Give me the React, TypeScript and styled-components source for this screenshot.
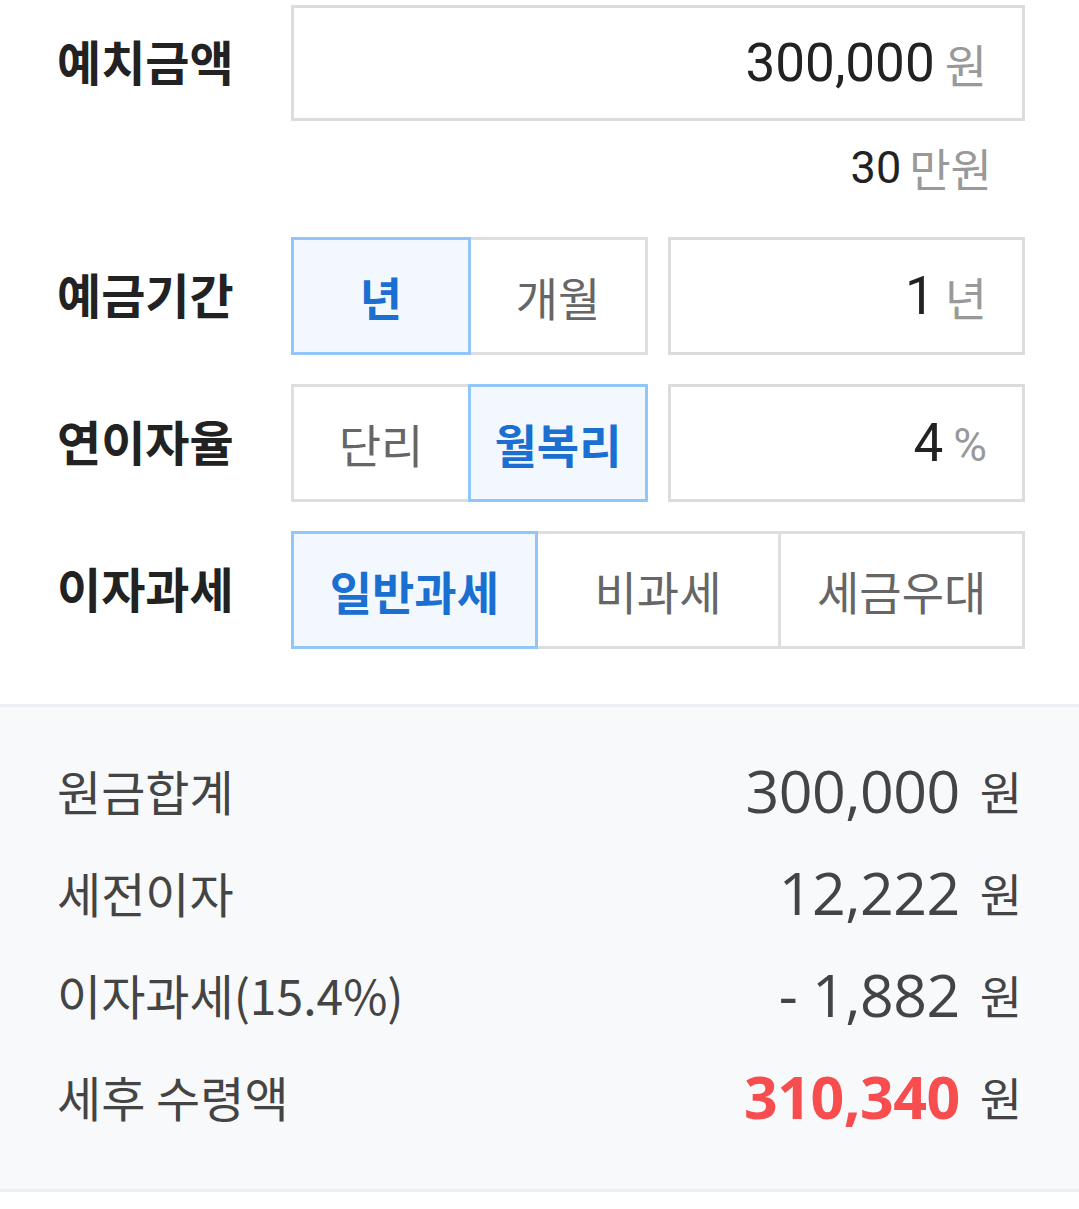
import React from 'react'
import styled, { createGlobalStyle } from 'styled-components'

const GlobalStyle = createGlobalStyle`
  html, body {
    margin: 0;
    padding: 0;
    background: #fff;
  }
  body {
    font-family: 'Noto Sans CJK KR', 'Noto Sans', sans-serif;
    color: #222;
  }
`

const KR = `'Noto Sans CJK KR', 'Noto Sans', sans-serif`

const Page = styled.div`
  width: 1079px;
  padding-top: 5px;
`

const Form = styled.div`
  padding: 0 54px 0 57px;
`

const Row = styled.div<{ mt?: number }>`
  display: grid;
  grid-template-columns: 234px 1fr;
  align-items: center;
  margin-top: ${({ mt }) => mt ?? 0}px;
`

const Label = styled.div`
  font-family: ${KR};
  font-weight: 700;
  font-size: 48px;
  color: #222;
  padding-bottom: 6px;
`

const Split = styled.div`
  display: grid;
  grid-template-columns: 1fr 1fr;
  gap: 20px;
`

const Segments = styled.div<{ cols: number }>`
  display: grid;
  grid-template-columns: repeat(${({ cols }) => cols}, 1fr);
  height: 118px;
  padding-left: 3px;
`

const Segment = styled.div<{ active?: boolean }>`
  position: relative;
  margin-left: -3px;
  display: flex;
  align-items: center;
  justify-content: center;
  border: 3px solid ${({ active }) => (active ? '#92c6f8' : '#dedede')};
  background: ${({ active }) => (active ? '#f3f8ff' : '#fff')};
  z-index: ${({ active }) => (active ? 1 : 0)};
  font-family: ${KR};
  font-size: 46px;
  font-weight: ${({ active }) => (active ? 700 : 400)};
  color: ${({ active }) => (active ? '#1a6fd1' : '#666')};
`

const InputBox = styled.div<{ h?: number }>`
  height: ${({ h }) => h ?? 118}px;
  box-sizing: border-box;
  border: 3px solid #dcdcdc;
  background: #fff;
  display: flex;
  align-items: center;
  justify-content: flex-end;
  gap: 10px;
  padding-right: 35px;
`

const Num = styled.span`
  font-family: Roboto, 'Liberation Sans', sans-serif;
  font-size: 53px;
  color: #222;
`

const Unit = styled.span<{ small?: boolean }>`
  font-family: ${({ small }) => (small ? `Roboto, 'Liberation Sans', sans-serif` : KR)};
  font-size: 46px;
  color: #999;
  padding-top: ${({ small }) => (small ? 4 : 0)}px;
`

const Caption = styled.div`
  height: 52px;
  margin: 20px 0 44px;
  display: flex;
  justify-content: flex-end;
  align-items: center;
  gap: 8px;
  padding-right: 33px;
`

const CaptionNum = styled.span`
  font-family: Roboto, 'Liberation Sans', sans-serif;
  font-size: 45px;
  color: #222;
`

const CaptionUnit = styled.span`
  font-family: ${KR};
  font-size: 45px;
  color: #999;
`

const Result = styled.div`
  margin-top: 55px;
  background: #f8f9fb;
  border-top: 3px solid #eceff3;
  border-bottom: 3px solid #eceff3;
  padding: 32px 57px 42px 57px;
`

const ResultRow = styled.div`
  height: 102px;
  display: flex;
  align-items: center;
  justify-content: space-between;
`

const ResultLabel = styled.span`
  font-family: ${KR};
  font-size: 48px;
  color: #444;
`

const ResultValue = styled.div`
  display: flex;
  align-items: center;
  gap: 20px;
`

const Amount = styled.span<{ highlight?: boolean }>`
  font-family: 'Open Sans', 'Noto Sans', sans-serif;
  font-size: 59px;
  font-weight: ${({ highlight }) => (highlight ? 700 : 400)};
  color: ${({ highlight }) => (highlight ? '#f84d4f' : '#444')};
  letter-spacing: -0.5px;
`

const Won = styled.span`
  font-family: ${KR};
  font-size: 46px;
  color: #444;
`

const results = [
  { label: '원금합계', value: '300,000' },
  { label: '세전이자', value: '12,222' },
  { label: '이자과세(15.4%)', value: '- 1,882' },
  { label: '세후 수령액', value: '310,340', highlight: true },
]

const App: React.FC = () => {
  return (
    <Page>
      <GlobalStyle />
      <Form>
        <Row>
          <Label>예치금액</Label>
          <InputBox h={116}>
            <Num>300,000</Num>
            <Unit>원</Unit>
          </InputBox>
        </Row>
        <Caption>
          <CaptionNum>30</CaptionNum>
          <CaptionUnit>만원</CaptionUnit>
        </Caption>
        <Row>
          <Label>예금기간</Label>
          <Split>
            <Segments cols={2}>
              <Segment active>년</Segment>
              <Segment>개월</Segment>
            </Segments>
            <InputBox>
              <Num>1</Num>
              <Unit>년</Unit>
            </InputBox>
          </Split>
        </Row>
        <Row mt={29}>
          <Label>연이자율</Label>
          <Split>
            <Segments cols={2}>
              <Segment>단리</Segment>
              <Segment active>월복리</Segment>
            </Segments>
            <InputBox>
              <Num>4</Num>
              <Unit small>%</Unit>
            </InputBox>
          </Split>
        </Row>
        <Row mt={29}>
          <Label>이자과세</Label>
          <Segments cols={3}>
            <Segment active>일반과세</Segment>
            <Segment>비과세</Segment>
            <Segment>세금우대</Segment>
          </Segments>
        </Row>
      </Form>
      <Result>
        {results.map((r) => (
          <ResultRow key={r.label}>
            <ResultLabel>{r.label}</ResultLabel>
            <ResultValue>
              <Amount highlight={r.highlight}>{r.value}</Amount>
              <Won>원</Won>
            </ResultValue>
          </ResultRow>
        ))}
      </Result>
    </Page>
  )
}

export default App
